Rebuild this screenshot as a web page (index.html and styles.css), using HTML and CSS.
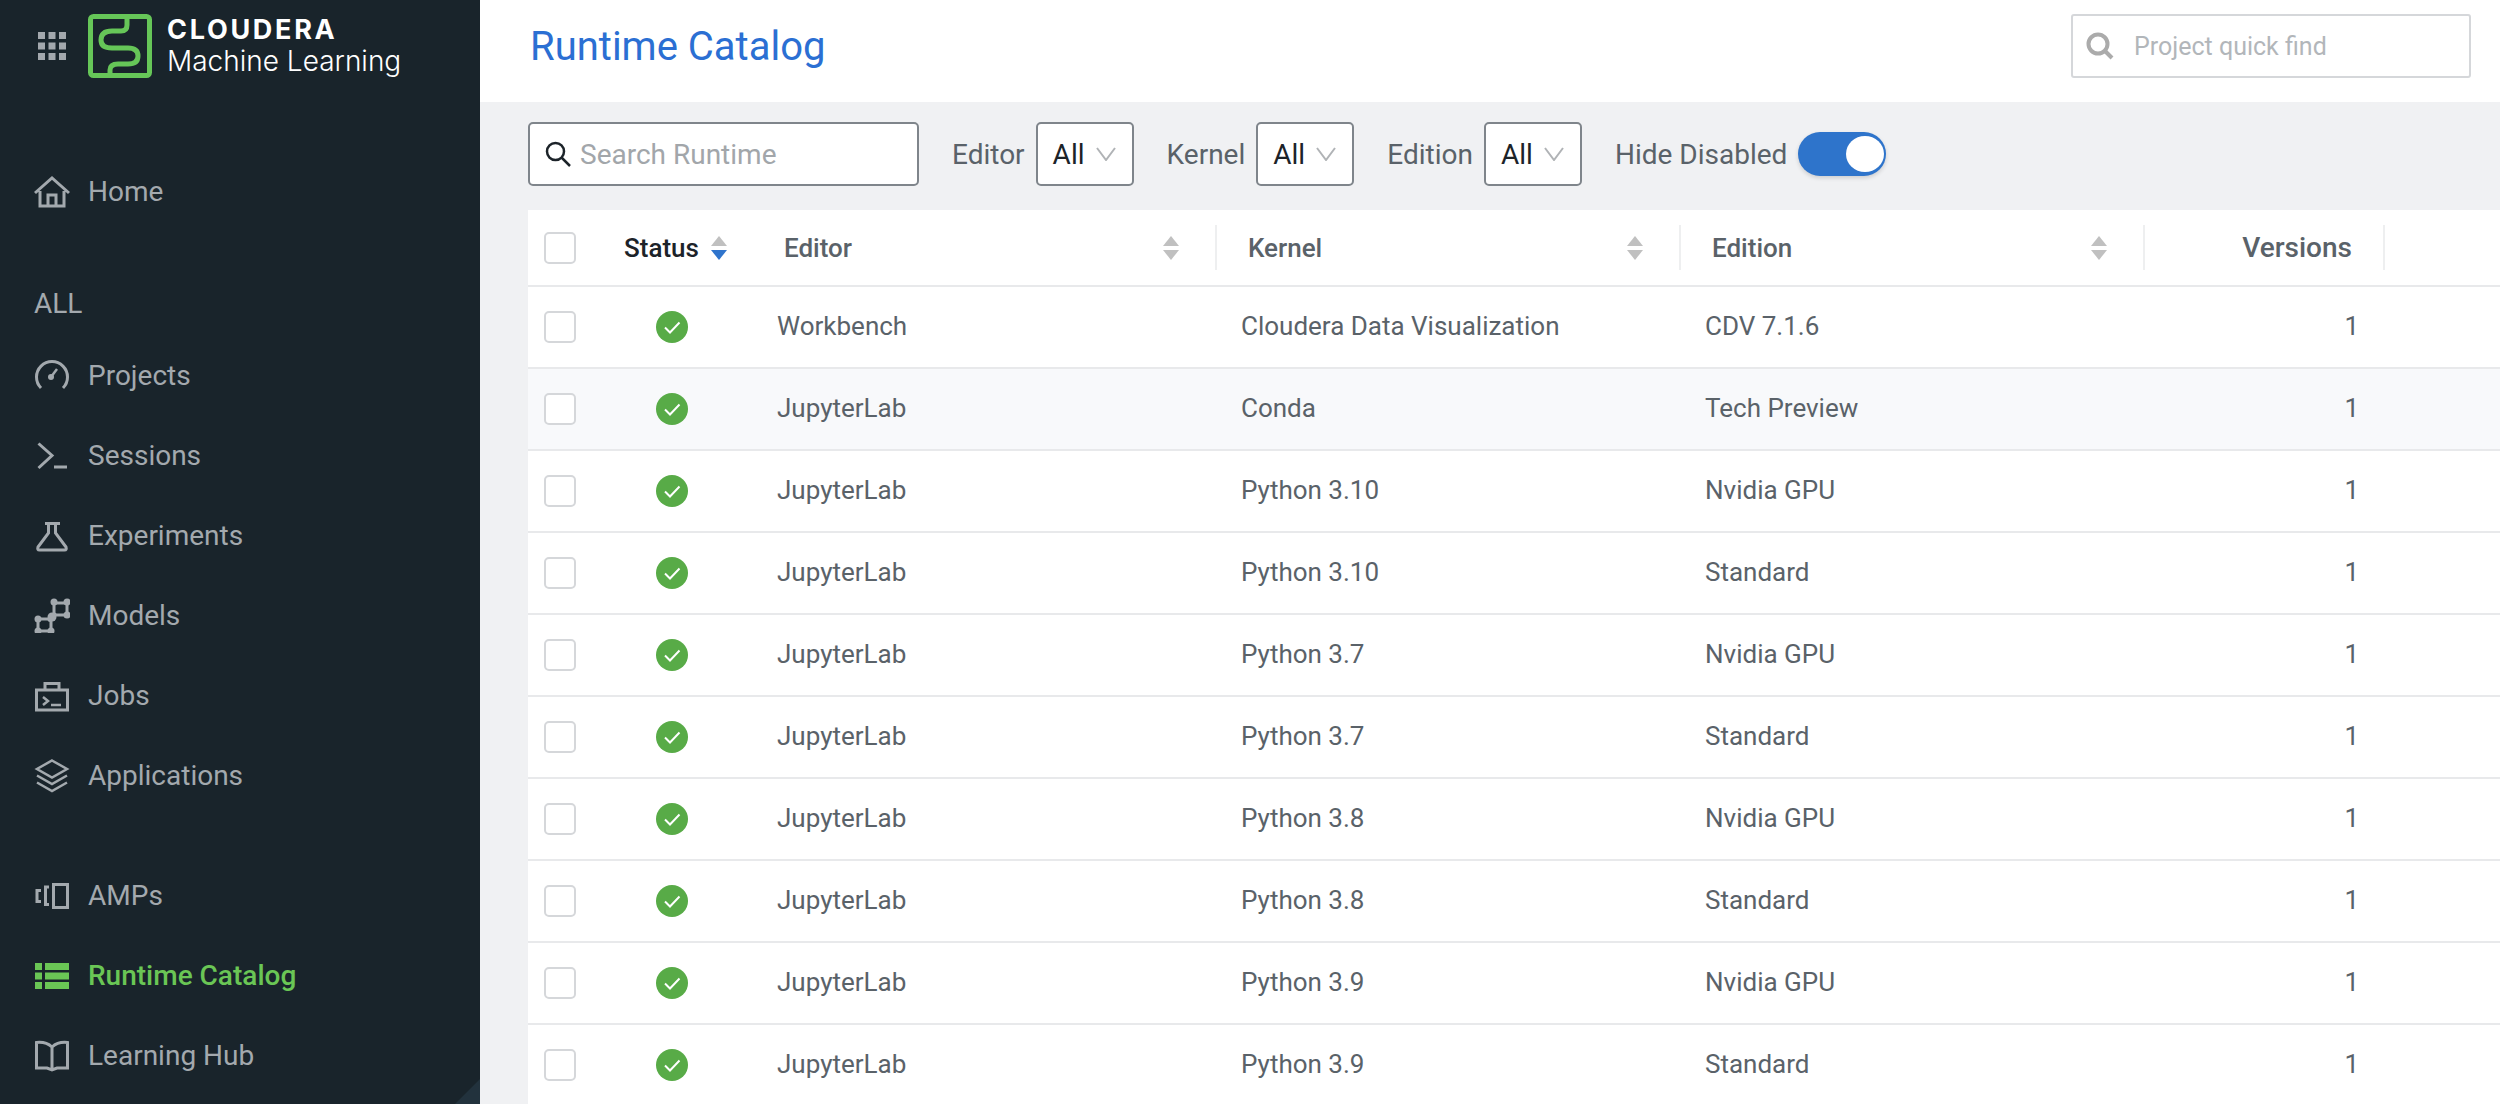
FILE: index.html
```html
<!DOCTYPE html>
<html lang="en">
<head>
  <meta charset="UTF-8">
  <title>Runtime Catalog</title>
  <link rel="stylesheet" href="styles.css">
</head>
<body>
  <aside class="sidebar">
    <div class="brand">
      <svg class="apps" width="28" height="28" viewBox="0 0 28 28">
        <rect x="0" y="0" width="7" height="7"/><rect x="10.5" y="0" width="7" height="7"/><rect x="21" y="0" width="7" height="7"/>
        <rect x="0" y="10.5" width="7" height="7"/><rect x="10.5" y="10.5" width="7" height="7"/><rect x="21" y="10.5" width="7" height="7"/>
        <rect x="0" y="21" width="7" height="7"/><rect x="10.5" y="21" width="7" height="7"/><rect x="21" y="21" width="7" height="7"/>
      </svg>
      <svg class="logo" width="64" height="64" viewBox="0 0 64 64" fill="none">
        <rect x="2.5" y="2.500" width="59" height="59" rx="3"/>
        <path d="M39 3V11Q39 17 33 17H24Q13 17 13 26Q13 34 24 34H40Q50 34 50 42Q50 50 40 50H30Q22 50 22 56V61"/>
      </svg>
      <div class="brand-text">
        <div class="brand-name">CLOUDERA</div>
        <div class="brand-sub">Machine Learning</div>
      </div>
    </div>

    <nav class="nav">
      <a class="nav-item" href="#">
        <svg viewBox="0 0 36 36"><path d="M1 20L18 5L35 20M6 18V33H30V18M14 33V22H22V33"/></svg>
        Home
      </a>
      <div class="nav-title">ALL</div>
      <a class="nav-item" href="#">
        <svg viewBox="0 0 36 36"><path d="M7 31A15.5 15.5 0 1 1 29 31"/><path class="thin" d="M17 20L23 12"/><circle class="dot" cx="17" cy="20" r="3"/></svg>
        Projects
      </a>
      <a class="nav-item" href="#">
        <svg viewBox="0 0 36 36"><path d="M4.5 6.5L18 18.5L4.5 31M20 30H33"/></svg>
        Sessions
      </a>
      <a class="nav-item" href="#">
        <svg viewBox="0 0 36 36"><path d="M11 6.5H26M14.5 6.5V16L4 30Q3 33 5.5 33H30.5Q33 33 32 30L21.5 16V6.5"/></svg>
        Experiments
      </a>
      <a class="nav-item" href="#">
        <svg viewBox="0 0 36 36">
          <path d="M20 6H33V18H20ZM4 22H17V34H4ZM14 24L22 16"/>
          <circle class="dot" cx="20" cy="5" r="3.5"/><circle class="dot" cx="33" cy="5" r="3.5"/><circle class="dot" cx="33" cy="18" r="3.5"/><circle class="dot" cx="18" cy="20" r="4.5"/>
          <circle class="dot" cx="4" cy="22" r="3.5"/><circle class="dot" cx="4" cy="34" r="3.5"/><circle class="dot" cx="17" cy="34" r="3.5"/>
        </svg>
        Models
      </a>
      <a class="nav-item" href="#">
        <svg viewBox="0 0 36 36"><path d="M2.500 13H33.500V33H2.500ZM11 13V6.500H25V13"/><path class="thin" d="M9 20L14 24L9 28M17 28H27"/></svg>
        Jobs
      </a>
      <a class="nav-item" href="#">
        <svg viewBox="0 0 36 36"><path class="thin" d="M18 3.500L33 12L18 20.500L3 12ZM3 18.500L18 27L33 18.500M3 25.500L18 34L33 25.500"/></svg>
        Applications
      </a>
      <div class="nav-gap"></div>
      <a class="nav-item" href="#">
        <svg viewBox="0 0 36 36"><path d="M19.500 7.500H33.500V30.500H19.500ZM15 10H11.500V27.500H15M7 13.500H3V24.500H7"/></svg>
        AMPs
      </a>
      <a class="nav-item active" href="#">
        <svg viewBox="0 0 36 36">
          <rect class="fill" x="1" y="6" width="7" height="7"/><rect class="fill" x="11" y="6" width="24" height="7"/>
          <rect class="fill" x="1" y="15.500" width="7" height="7"/><rect class="fill" x="11" y="15.500" width="24" height="7"/>
          <rect class="fill" x="1" y="25" width="7" height="7"/><rect class="fill" x="11" y="25" width="24" height="7"/>
        </svg>
        Runtime Catalog
      </a>
      <a class="nav-item" href="#">
        <svg viewBox="0 0 36 36"><path d="M18 10Q12 4.500 2.500 5.500V31H13L18 33L23 31H33.500V5.500Q24 4.500 18 10V32"/></svg>
        Learning Hub
      </a>
    </nav>
    <div class="corner"></div>
  </aside>

  <main class="main">
    <header class="topbar">
      <h1 class="title">Runtime Catalog</h1>
      <div class="quickfind">
        <svg width="28" height="28" viewBox="0 0 28 28" fill="none"><circle cx="12" cy="12" r="9.500"/><path d="M19 19L26 26"/></svg>
        <span>Project quick find</span>
      </div>
    </header>

    <div class="toolbar">
      <div class="search">
        <svg width="26" height="26" viewBox="0 0 26 26" fill="none"><circle cx="10.500" cy="10.500" r="8.500"/><path d="M16.500 16.500L25 25"/></svg>
        <span>Search Runtime</span>
      </div>
      <div class="filter">
        <span>Editor</span>
        <div class="select">All <svg width="20" height="14" viewBox="0 0 20 14" fill="none"><path d="M1 1L10 13L19 1"/></svg></div>
      </div>
      <div class="filter">
        <span>Kernel</span>
        <div class="select">All <svg width="20" height="14" viewBox="0 0 20 14" fill="none"><path d="M1 1L10 13L19 1"/></svg></div>
      </div>
      <div class="filter">
        <span>Edition</span>
        <div class="select">All <svg width="20" height="14" viewBox="0 0 20 14" fill="none"><path d="M1 1L10 13L19 1"/></svg></div>
      </div>
      <div class="filter">
        <span>Hide Disabled</span>
        <div class="toggle"><div class="knob"></div></div>
      </div>
    </div>

    <table class="runtimes">
      <colgroup>
        <col class="c-check"><col class="c-status"><col class="c-text"><col class="c-text"><col class="c-text"><col class="c-versions"><col>
      </colgroup>
      <thead>
        <tr>
          <th><div class="box"></div></th>
          <th><div class="th-status">Status <svg class="sort" width="18" height="24" viewBox="0 0 18 24"><path class="up" d="M9 0L17 10H1Z"/><path class="down-on" d="M1 14H17L9 24Z"/></svg></div></th>
          <th><div class="th">Editor <svg class="sort" width="18" height="24" viewBox="0 0 18 24"><path class="up" d="M9 0L17 10H1Z"/><path class="up" d="M1 14H17L9 24Z"/></svg></div></th>
          <th><div class="th">Kernel <svg class="sort" width="18" height="24" viewBox="0 0 18 24"><path class="up" d="M9 0L17 10H1Z"/><path class="up" d="M1 14H17L9 24Z"/></svg></div></th>
          <th><div class="th">Edition <svg class="sort" width="18" height="24" viewBox="0 0 18 24"><path class="up" d="M9 0L17 10H1Z"/><path class="up" d="M1 14H17L9 24Z"/></svg></div></th>
          <th><div class="th th-right">Versions</div></th>
          <th></th>
        </tr>
      </thead>
      <tbody id="rows"></tbody>
    </table>
  </main>

  <script>
    var data = [
      ['Workbench', 'Cloudera Data Visualization', 'CDV 7.1.6'],
      ['JupyterLab', 'Conda', 'Tech Preview'],
      ['JupyterLab', 'Python 3.10', 'Nvidia GPU'],
      ['JupyterLab', 'Python 3.10', 'Standard'],
      ['JupyterLab', 'Python 3.7', 'Nvidia GPU'],
      ['JupyterLab', 'Python 3.7', 'Standard'],
      ['JupyterLab', 'Python 3.8', 'Nvidia GPU'],
      ['JupyterLab', 'Python 3.8', 'Standard'],
      ['JupyterLab', 'Python 3.9', 'Nvidia GPU'],
      ['JupyterLab', 'Python 3.9', 'Standard']
    ]
    var check = '<svg class="ok" width="32" height="32" viewBox="0 0 32 32"><circle cx="16" cy="16" r="16"/><path d="M9 16.500L14 21.500L23.500 11.500"/></svg>'
    var str = ''
    for (var i = 0; i < data.length; i++) {
      str += '<tr' + (i === 1 ? ' class="hover"' : '') + '>'
      str += '<td><div class="box"></div></td>'
      str += '<td class="status">' + check + '</td>'
      str += '<td class="cell">' + data[i][0] + '</td>'
      str += '<td class="cell">' + data[i][1] + '</td>'
      str += '<td class="cell">' + data[i][2] + '</td>'
      str += '<td class="num">1</td><td></td></tr>'
    }
    document.querySelector('#rows').innerHTML = str
  </script>
</body>
</html>
```

FILE: styles.css
```css
*{
  margin: 0;
  padding: 0;
  box-sizing: border-box;
}
html, body{
  height: 1104px;
  overflow: hidden;
}
body{
  display: flex;
  font-family: Roboto, "Liberation Sans", sans-serif;
  background: #f0f1f3;
  color: #5a6269;
}

/* sidebar */
.sidebar{
  width: 480px;
  flex: none;
  height: 1104px;
  background: #19242b;
  position: relative;
  overflow: hidden;
}
.brand{
  display: flex;
  align-items: center;
  height: 92px;
  padding-left: 38px;
}
.apps{
  fill: #a3a8ad;
  margin-right: 22px;
}
.logo{
  margin-right: 15px;
}
.logo rect, .logo path{
  stroke: #66c658;
  stroke-width: 5;
}
.brand-text{
  color: #ffffff;
  font-family: Inter, sans-serif;
}
.brand-name{
  font-size: 27px;
  font-weight: 700;
  line-height: 29px;
  letter-spacing: 2.7px;
}
.brand-sub{
  font-size: 28px;
  font-weight: 300;
  line-height: 34px;
}
.nav{
  padding-top: 59px;
}
.nav-item, .nav-title{
  display: flex;
  align-items: center;
  height: 80px;
  padding-left: 34px;
  font-size: 28px;
  color: #a3a9ae;
  text-decoration: none;
}
.nav-title{
  height: 104px;
  padding-top: 40px;
}
.nav-item svg{
  width: 36px;
  height: 36px;
  margin-right: 18px;
  fill: none;
  stroke: #a3a9ae;
  stroke-width: 3;
}
.nav-item svg .thin{
  stroke-width: 2.5;
}
.nav-item svg .dot{
  fill: #a3a9ae;
  stroke: none;
}
.nav-item svg .fill{
  fill: #6ac655;
  stroke: none;
}
.nav-gap{
  height: 40px;
}
.nav-item.active{
  color: #6ac655;
  font-weight: 500;
}
.corner{
  position: absolute;
  right: 0;
  bottom: 0;
  width: 25px;
  height: 25px;
  background: #22323d;
  clip-path: polygon(100% 0, 100% 100%, 0 100%);
}

/* top bar */
.main{
  flex: 1;
  min-width: 0;
}
.topbar{
  display: flex;
  align-items: center;
  justify-content: space-between;
  height: 102px;
  padding: 0 29px 10px 50px;
  background: #ffffff;
}
.title{
  font-size: 40px;
  font-weight: 400;
  color: #2b6fd3;
}
.quickfind{
  display: flex;
  align-items: center;
  width: 400px;
  height: 64px;
  padding-left: 13px;
  border: 2px solid #d5d7da;
  border-radius: 3px;
  background: #ffffff;
  font-size: 25px;
  color: #b2b6ba;
}
.quickfind svg{
  margin-right: 20px;
}
.quickfind svg circle, .quickfind svg path{
  stroke: #ababab;
  stroke-width: 4;
}

/* filters */
.toolbar{
  display: flex;
  align-items: center;
  gap: 33px;
  height: 108px;
  padding: 0 0 4px 48px;
  font-size: 28px;
}
.search{
  display: flex;
  align-items: center;
  width: 391px;
  height: 64px;
  padding-left: 15px;
  background: #ffffff;
  border: 2px solid #7f858b;
  border-radius: 5px;
  color: #a2a6aa;
}
.search svg{
  margin-right: 9px;
}
.search svg circle, .search svg path{
  stroke: #1c2329;
  stroke-width: 2.5;
}
.filter{
  display: flex;
  align-items: center;
  gap: 11px;
}
.select{
  display: flex;
  align-items: center;
  justify-content: space-between;
  width: 98px;
  height: 64px;
  padding: 0 16px 0 15px;
  background: #ffffff;
  border: 2px solid #7f858b;
  border-radius: 5px;
  color: #1c2329;
}
.select svg path{
  stroke: #b0b3b6;
  stroke-width: 2;
}
.toggle{
  width: 88px;
  height: 44px;
  padding: 4px 2px;
  display: flex;
  justify-content: flex-end;
  border-radius: 22px;
  background: #2e74cb;
  box-shadow: 0 2px 4px rgba(0, 0, 0, 0.15);
}
.knob{
  width: 38px;
  height: 36px;
  border-radius: 50%;
  background: #ffffff;
}

/* table */
.runtimes{
  margin-left: 48px;
  width: 1972px;
  table-layout: fixed;
  border-collapse: separate;
  border-spacing: 0;
  background: #ffffff;
  font-size: 26px;
}
.c-check{
  width: 72px;
}
.c-status{
  width: 153px;
}
.c-text{
  width: 464px;
}
.c-versions{
  width: 240px;
}
.runtimes th{
  height: 77px;
  border-bottom: 2px solid #e8e9eb;
  font-weight: 500;
  text-align: left;
  vertical-align: middle;
}
.runtimes td{
  height: 82px;
  border-bottom: 2px solid #e8e9eb;
  vertical-align: middle;
}
.runtimes th:first-child{
  border-top-left-radius: 4px;
}
.runtimes .hover td{
  background: #f8f9fb;
}
.box{
  width: 32px;
  height: 32px;
  margin-left: 16px;
  border: 2px solid #d5d7da;
  border-radius: 5px;
  background: #ffffff;
}
.th-status{
  display: flex;
  align-items: center;
  gap: 11px;
  padding-left: 24px;
  color: #1c2329;
}
.th{
  display: flex;
  align-items: center;
  justify-content: space-between;
  height: 45px;
  padding: 0 35px 0 31px;
  border-right: 2px solid #eeeff0;
}
.th-right{
  justify-content: flex-end;
  padding-right: 31px;
  font-size: 28px;
}
.sort .up{
  fill: #c0c0c0;
}
.sort .down-on{
  fill: #2f74cc;
}
.status{
  padding-left: 56px;
}
.ok{
  display: block;
}
.ok circle{
  fill: #58ab47;
}
.ok path{
  fill: none;
  stroke: #ffffff;
  stroke-width: 2;
}
.runtimes .cell{
  padding: 0 0 3px 24px;
}
.runtimes .num{
  text-align: right;
  padding: 0 26px 3px 0;
}
```
